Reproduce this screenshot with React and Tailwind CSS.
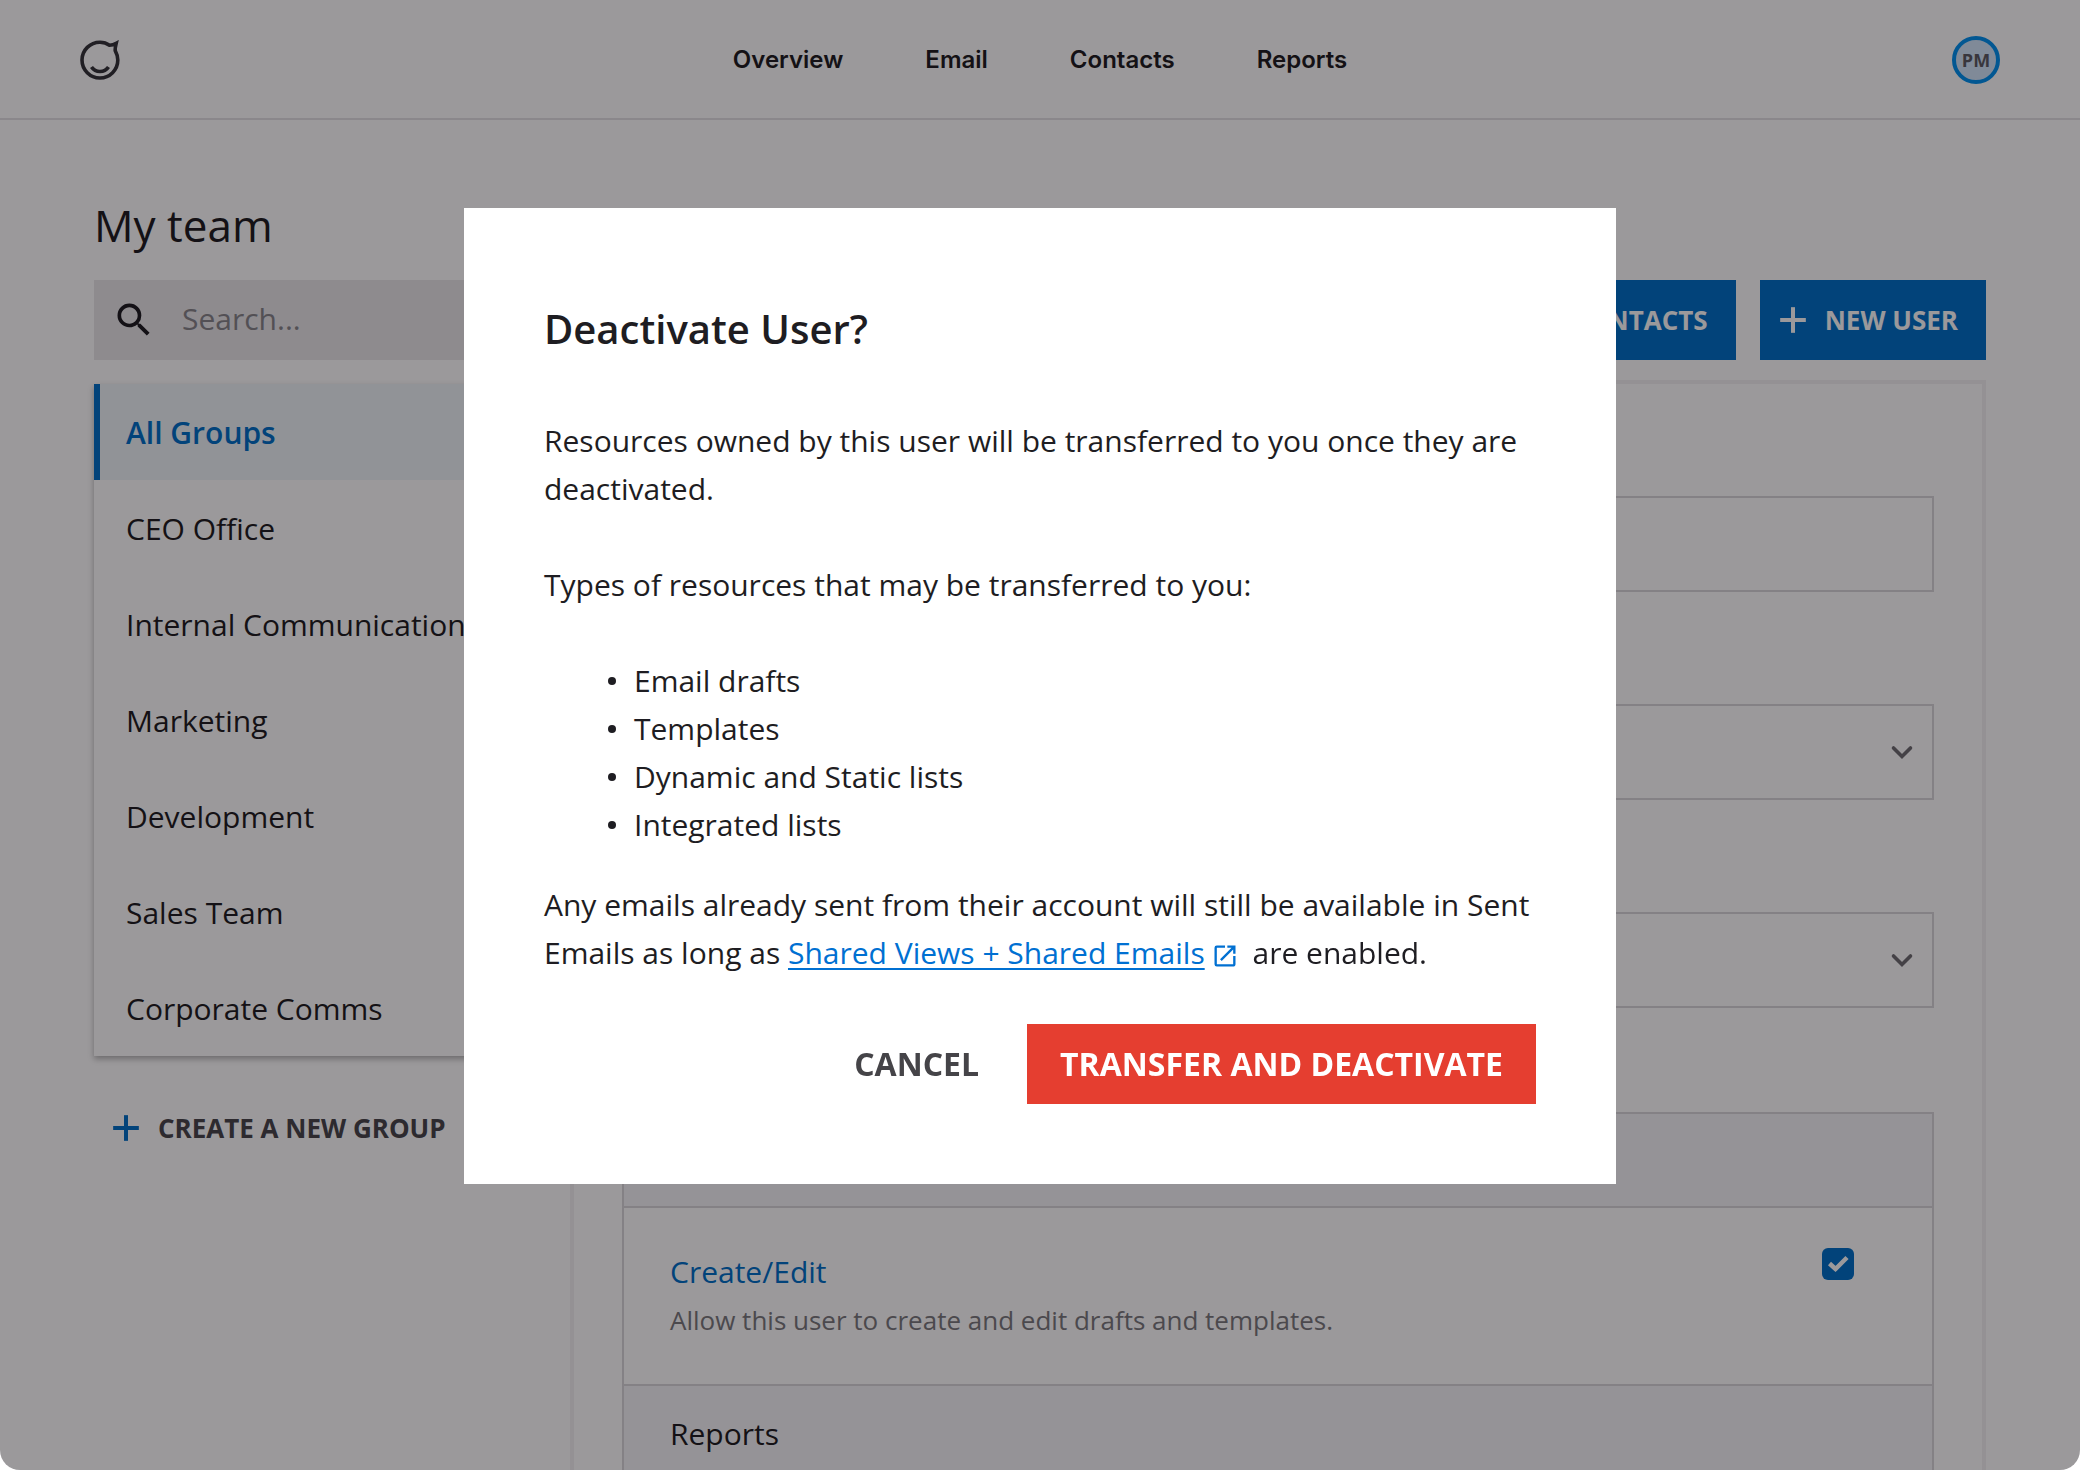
import React from "react";
import { Plus } from "lucide-react";
import { MdSearch, MdOpenInNew } from "react-icons/md";

const navLinks = ["Overview", "Email", "Contacts", "Reports"];

const groups = [
  "All Groups",
  "CEO Office",
  "Internal Communications",
  "Marketing",
  "Development",
  "Sales Team",
  "Corporate Comms",
];

const resources = [
  "Email drafts",
  "Templates",
  "Dynamic and Static lists",
  "Integrated lists",
];

const Logo = () => (
  <svg className="h-10 w-10" viewBox="0 0 40 40" fill="none" stroke="#35343a" strokeWidth="3.6">
    <path d="M29.5 5.2 C26.8 3.2 23.6 2.2 20 2.2 A17.9 17.9 0 1 0 37.8 20 C37.8 16.4 36.6 13.2 35.2 10.6 C35 7.6 35.7 5.6 36.2 3.4 C34.4 4.4 32 5.2 29.5 5.2 Z" />
    <path d="M11.5 27 C15.5 33 24.5 33 28.5 27" />
  </svg>
);

const Chevron = () => (
  <svg
    className="pointer-events-none absolute right-5 top-9 h-6 w-6"
    viewBox="0 0 24 24"
    fill="none"
    stroke="#6f6d72"
    strokeWidth="3.6"
    strokeLinecap="round"
  >
    <path d="M3.5 8 L12 16.5 L20.5 8" />
  </svg>
);

const Header = () => (
  <header className="grid h-[120px] grid-cols-3 items-center border-b-2 border-[#e3e1e5] px-20 pt-0.5">
    <a href="#home" aria-label="Home" className="justify-self-start">
      <Logo />
    </a>
    <nav className="flex justify-center gap-[82px] font-['Inter',sans-serif] text-2xl font-semibold">
      {navLinks.map((link) => (
        <a key={link} href={`#${link.toLowerCase()}`}>
          {link}
        </a>
      ))}
    </nav>
    <button className="flex h-12 w-12 items-center justify-center justify-self-end rounded-full border-4 border-[#0092f0] bg-[#d3e6fa] text-lg font-bold text-[#5b5b63]">
      PM
    </button>
  </header>
);

const Sidebar = () => (
  <aside className="w-[452px] shrink-0">
    <ul className="bg-white shadow-[0_3px_6px_rgba(0,0,0,0.3)]">
      {groups.map((group, i) => (
        <li key={group}>
          <a
            href="#group"
            className={
              i === 0
                ? "flex h-24 items-center border-l-[6px] border-[#0070c8] bg-[#eff5f9] pl-[26px] font-semibold text-[#0070c8]"
                : "flex h-24 items-center pl-8"
            }
          >
            {group}
          </a>
        </li>
      ))}
    </ul>
    <button className="mt-8 flex h-20 items-center gap-2.5 pl-2.5 text-[26px] font-bold text-[#48474c]">
      <Plus className="h-11 w-11 text-[#0070c8]" strokeWidth={2.2} strokeLinecap="butt" />
      CREATE A NEW GROUP
    </button>
  </aside>
);

const SelectField = ({ id, label }) => (
  <div className="pt-16">
    <div className="relative">
      <select
        id={id}
        aria-label={label}
        className="h-24 w-full appearance-none border-2 border-[#d9d8db] bg-white px-6"
      >
        <option></option>
      </select>
      <Chevron />
    </div>
  </div>
);

const UserForm = () => (
  <main className="-mt-1 min-w-0 flex-1 border-4 border-[#f3f2f4] px-12 pt-12">
    <div className="flex flex-col gap-12">
      <div className="pt-16">
        <input
          type="text"
          aria-label="Name"
          className="block h-24 w-full border-2 border-[#d9d8db] px-6"
        />
      </div>
      <SelectField id="role" label="Role" />
      <SelectField id="group" label="Group" />
    </div>
    <section className="mt-[104px] border-2 border-[#d9d8db]">
      <div className="h-[92px] bg-[#f5f5f9]" />
      <div className="flex h-[178px] items-start justify-between border-t-2 border-[#d9d8db] pl-[46px] pr-[78px] pt-10">
        <div>
          <label htmlFor="create" className="block leading-[48px] text-[#0070c8]">
            Create/Edit
          </label>
          <p className="text-[26px] leading-[48px] text-[#7b7a7e]">
            Allow this user to create and edit drafts and templates.
          </p>
        </div>
        <div className="relative h-8 w-8">
          <input
            id="create"
            type="checkbox"
            defaultChecked
            className="block h-8 w-8 appearance-none rounded-md bg-[#0070c8]"
          />
          <svg
            className="pointer-events-none absolute inset-0 h-8 w-8"
            viewBox="0 0 32 32"
            fill="none"
            stroke="#fff"
            strokeWidth="4.5"
          >
            <path d="M7.5 15.5 L13.5 21 L25 9.5" />
          </svg>
        </div>
      </div>
      <h2 className="flex h-24 items-center border-t-2 border-[#d9d8db] bg-[#f5f5f9] px-[46px]">
        Reports
      </h2>
    </section>
  </main>
);

const DeactivateDialog = () => (
  <div className="fixed inset-0 flex items-start justify-center overflow-hidden rounded-b-[20px] bg-[#050005]/40 pt-52">
    <div
      role="dialog"
      aria-modal="true"
      aria-labelledby="dialog-title"
      className="w-[1152px] bg-white p-20 leading-[48px] text-[#1e1d22]"
    >
      <h2 id="dialog-title" className="mb-12 text-[40px] font-semibold leading-[81px]">
        Deactivate User?
      </h2>
      <p className="mb-12">
        Resources owned by this user will be transferred to you once they are deactivated.
      </p>
      <p className="mb-12">Types of resources that may be transferred to you:</p>
      <ul className="mb-8 pl-16">
        {resources.map((item) => (
          <li key={item} className="flex items-center gap-[18px]">
            <span className="h-2 w-2 rounded-full bg-[#1e1d22]" />
            {item}
          </li>
        ))}
      </ul>
      <p className="mb-[47px]">
        Any emails already sent from their account will still be available in Sent Emails as long as{" "}
        <a href="#shared" className="text-[#0070d2]">
          <span className="underline decoration-2 underline-offset-4">Shared Views + Shared Emails</span>
          <MdOpenInNew className="mx-1.5 inline h-7 w-7" />
        </a>{" "}
        are enabled.
      </p>
      <div className="flex justify-end gap-4 text-[32px] font-bold">
        <button className="h-20 px-8 text-[#454448]">CANCEL</button>
        <button className="h-20 bg-[#e53e30] px-[33px] text-white">TRANSFER AND DEACTIVATE</button>
      </div>
    </div>
  </div>
);

const App = () => {
  return (
    <div className="h-screen overflow-hidden rounded-b-[20px] bg-white font-['Open_Sans',sans-serif] text-[30px] text-[#1e1d22]">
      <Header />
      <div className="px-[94px] pt-[76px]">
        <h1 className="text-[44px] leading-[58px]">My team</h1>
        <div className="mt-[26px] flex gap-6">
          <div className="flex h-20 flex-1 items-center gap-[26px] bg-[#e9e8ea] pl-[18px]">
            <MdSearch className="h-11 w-11" />
            <input
              type="search"
              aria-label="Search"
              placeholder="Search..."
              className="h-20 min-w-0 flex-1 pb-1 placeholder:text-[#87868a]"
            />
          </div>
          <button className="flex h-20 items-center gap-2.5 bg-[#0070c8] pl-[11px] pr-7 text-[26px] font-bold text-white">
            <Plus className="h-11 w-11" strokeWidth={2.2} strokeLinecap="butt" />
            NEW CONTACTS
          </button>
          <button className="flex h-20 items-center gap-2.5 bg-[#0070c8] pl-[11px] pr-7 text-[26px] font-bold text-white">
            <Plus className="h-11 w-11" strokeWidth={2.2} strokeLinecap="butt" />
            NEW USER
          </button>
        </div>
        <div className="mt-6 flex items-start gap-6">
          <Sidebar />
          <UserForm />
        </div>
      </div>
      <DeactivateDialog />
    </div>
  );
};

export default App;
